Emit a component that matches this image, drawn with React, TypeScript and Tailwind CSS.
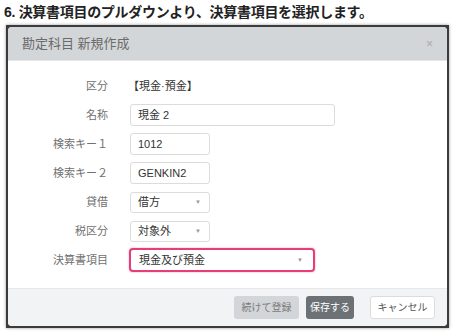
import React from "react";

const font = {
  fontFamily: '"Liberation Sans", "Noto Sans CJK JP", sans-serif',
};

const Caret = () => (
  <span className="text-[6px] leading-none text-[#999]">▼</span>
);

const Row = ({ label, children }: { label: string; children: React.ReactNode }) => {
  return (
    <div className="flex items-center h-[22px]">
      <div className="w-[101px] pr-[1px] text-right text-[11px] text-[#707070]">{label}</div>
      <div className="ml-[21px] flex items-center">{children}</div>
    </div>
  );
};

const TextBox = ({ value, width }: { value: string; width: string }) => (
  <div
    className={`${width} h-[22px] flex items-center px-[7px] border border-[#dcdcdc] rounded-[3px] bg-white text-[11px] text-[#333]`}
  >
    {value}
  </div>
);

const SelectBox = ({ value, width }: { value: string; width: string }) => (
  <div
    className={`${width} h-[21px] flex items-center justify-between pl-[7px] pr-[8px] border border-[#dcdcdc] rounded-[3px] bg-white text-[11px] text-[#333]`}
  >
    <span>{value}</span>
    <Caret />
  </div>
);

export default function App() {
  return (
    <div className="w-[452px] h-[335px] bg-white overflow-hidden" style={font}>
      <div className="h-[25px] pl-[4px] pt-[2px] text-[14px] font-bold text-[#222] leading-[20px] tracking-[-0.3px]">
        6. 決算書項目のプルダウンより、決算書項目を選択します。
      </div>

      <div className="ml-[6px] w-[443px] h-[303px] bg-[#3b3b3b] p-[2px] shadow-[0_0_3px_rgba(0,0,0,0.4)]">
        <div className="h-full bg-white rounded-[4px] overflow-hidden flex flex-col">
          <div className="h-[34px] bg-[#d3d6d9] border-b border-[#e4e6e8] flex items-center justify-between pl-[14px] pr-[14px]">
            <span className="text-[13px] text-[#6b6b6b]">勘定科目 新規作成</span>
            <span className="text-[12px] text-[#a9a9a9] leading-none">×</span>
          </div>

          <div className="flex-1 flex flex-col gap-[7px] pt-[14px]">
            <Row label="区分">
              <span className="text-[11px] text-[#333] -ml-[2px]">【現金·預金】</span>
            </Row>
            <Row label="名称">
              <TextBox value="現金 2" width="w-[205px]" />
            </Row>
            <Row label="検索キー１">
              <TextBox value="1012" width="w-[80px]" />
            </Row>
            <Row label="検索キー２">
              <TextBox value="GENKIN2" width="w-[80px]" />
            </Row>
            <Row label="貸借">
              <SelectBox value="借方" width="w-[80px]" />
            </Row>
            <Row label="税区分">
              <SelectBox value="対象外" width="w-[80px]" />
            </Row>
            <Row label="決算書項目">
              <div className="-ml-[1px] w-[186px] h-[24px] flex items-center justify-between pl-[8px] pr-[10px] border-2 border-[#e83e77] rounded-[4px] bg-white text-[11px] text-[#333] shadow-[0_0_2px_rgba(232,62,119,0.5)]">
                <span>現金及び預金</span>
                <Caret />
              </div>
            </Row>
          </div>

          <div className="h-[38px] bg-[#f1f3f5] border-t border-[#e6e8ea] flex items-center justify-end pr-[12px]">
            <div className="h-[23px] w-[65px] flex items-center justify-center rounded-[3px] bg-[#d3d6d9] text-[10px] text-[#7a7a7a]">
              続けて登録
            </div>
            <div className="ml-[7px] h-[23px] w-[48px] flex items-center justify-center rounded-[3px] bg-[#6c7176] text-[10px] text-white">
              保存する
            </div>
            <div className="ml-[16px] h-[23px] w-[65px] flex items-center justify-center rounded-[3px] bg-white border border-[#dcdcdc] text-[10px] text-[#555]">
              キャンセル
            </div>
          </div>
        </div>
      </div>
    </div>
  );
}
